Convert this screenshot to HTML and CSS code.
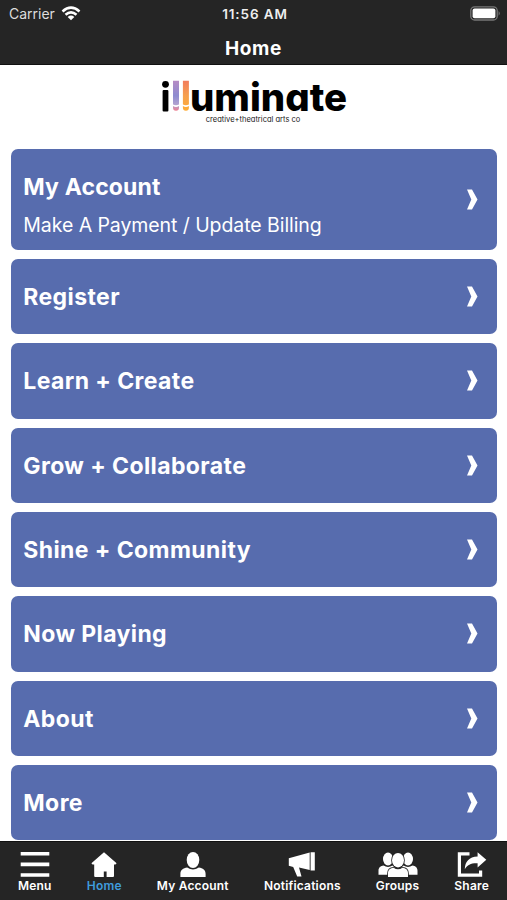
FILE: index.html
```html
<!DOCTYPE html>
<html lang="en">
<head>
  <meta charset="UTF-8">
  <meta name="viewport" content="width=device-width, initial-scale=1.0">
  <title>Home</title>
  <link rel="stylesheet" href="styles.css">
</head>
<body>
  <header class="top-bar">
    <div class="status-bar">
      <div class="carrier">
        <span>Carrier</span>
        <svg width="20" height="15" viewBox="0 0 20 15">
          <g fill="none" stroke="#fff" stroke-width="2.6">
            <path d="M1.5 5.4Q10-2 18.5 5.4"/>
            <path d="M4.5 8.7Q10 3.9 15.5 8.7"/>
          </g>
          <path d="M6.7 10.9Q10 8.2 13.3 10.9L10 14.3Z" fill="#fff"/>
        </svg>
      </div>
      <span class="time">11:56 AM</span>
      <svg class="battery" width="31" height="15" viewBox="0 0 31 15">
        <rect x="0.8" y="0.8" width="26.4" height="13.2" rx="3.8" fill="#252525" stroke="#777" stroke-width="1.3"/>
        <rect x="2.6" y="2.5" width="22.8" height="9.8" rx="2" fill="#fff"/>
        <path d="M28.6 5Q31 7.4 28.6 9.8Z" fill="#777"/>
      </svg>
    </div>
    <h1 class="title">Home</h1>
  </header>

  <main class="content">
    <svg class="logo" width="190" height="48" viewBox="0 0 190 48">
      <defs>
        <linearGradient id="violet" x1="0" y1="0" x2="0" y2="1">
          <stop offset="0" stop-color="#b58bc4"/>
          <stop offset="0.5" stop-color="#8d8bd0"/>
          <stop offset="0.8" stop-color="#b3a3d0"/>
          <stop offset="1" stop-color="#ee7f90"/>
        </linearGradient>
        <linearGradient id="orange" x1="0" y1="0" x2="0" y2="1">
          <stop offset="0" stop-color="#f27c5c"/>
          <stop offset="0.5" stop-color="#f6a04f"/>
          <stop offset="1" stop-color="#ffad35"/>
        </linearGradient>
      </defs>
      <rect x="3.6" y="12" width="5.8" height="21.4" rx="1"/>
      <circle cx="6.5" cy="6.3" r="3.4"/>
      <path d="M14 2.8h6v23.6q-3 1.6-6 0ZM14 28q3 1.8 6 0v1.7a3 3 0 0 1-6 0Z" fill="url(#violet)"/>
      <path d="M23.9 2.8h6v23.6q-3 1.6-6 0ZM23.9 28q3 1.8 6 0v1.7a3 3 0 0 1-6 0Z" fill="url(#orange)"/>
      <text class="logo-name" x="31" y="33.4" textLength="157" lengthAdjust="spacingAndGlyphs">uminate</text>
      <text class="logo-sub" x="46.8" y="44" textLength="94.5" lengthAdjust="spacingAndGlyphs">creative+theatrical arts co</text>
    </svg>

    <nav class="menu">
      <a class="menu-item tall">
        <span class="label">My Account<small>Make A Payment / Update Billing</small></span>
        <svg class="arrow" viewBox="0 0 11 21"><path d="M0 .4H5L10.5 10.5 5 20.6H0L4.3 10.5Z"/></svg>
      </a>
      <a class="menu-item">
        <span class="label">Register</span>
        <svg class="arrow" viewBox="0 0 11 21"><path d="M0 .4H5L10.5 10.5 5 20.6H0L4.3 10.5Z"/></svg>
      </a>
      <a class="menu-item">
        <span class="label">Learn + Create</span>
        <svg class="arrow" viewBox="0 0 11 21"><path d="M0 .4H5L10.5 10.5 5 20.6H0L4.3 10.5Z"/></svg>
      </a>
      <a class="menu-item">
        <span class="label">Grow + Collaborate</span>
        <svg class="arrow" viewBox="0 0 11 21"><path d="M0 .4H5L10.5 10.5 5 20.6H0L4.3 10.5Z"/></svg>
      </a>
      <a class="menu-item">
        <span class="label">Shine + Community</span>
        <svg class="arrow" viewBox="0 0 11 21"><path d="M0 .4H5L10.5 10.5 5 20.6H0L4.3 10.5Z"/></svg>
      </a>
      <a class="menu-item">
        <span class="label">Now Playing</span>
        <svg class="arrow" viewBox="0 0 11 21"><path d="M0 .4H5L10.5 10.5 5 20.6H0L4.3 10.5Z"/></svg>
      </a>
      <a class="menu-item">
        <span class="label">About</span>
        <svg class="arrow" viewBox="0 0 11 21"><path d="M0 .4H5L10.5 10.5 5 20.6H0L4.3 10.5Z"/></svg>
      </a>
      <a class="menu-item">
        <span class="label">More</span>
        <svg class="arrow" viewBox="0 0 11 21"><path d="M0 .4H5L10.5 10.5 5 20.6H0L4.3 10.5Z"/></svg>
      </a>
    </nav>
  </main>

  <footer class="tab-bar">
    <a class="tab">
      <svg width="30" height="26" viewBox="0 0 30 26"><path d="M.7 0h28.6v3.6H.7zM.7 10.6h28.6v3.6H.7zM.7 21.2h28.6v3.6H.7z"/></svg>
      <span>Menu</span>
    </a>
    <a class="tab active">
      <svg width="26" height="26" viewBox="0 0 26 26"><path d="M13 .3 25.6 11.2 24.5 12.4H23V24a1 1 0 0 1-1 1h-6.4v-5.5h-2.8V25H4.2a1 1 0 0 1-1-1V12.4H1.5L.4 11.2Z"/></svg>
      <span>Home</span>
    </a>
    <a class="tab">
      <svg width="26" height="26" viewBox="0 0 26 26"><ellipse cx="13" cy="8" rx="6.3" ry="8"/><path d="M.4 25v-3c0-4 2.7-6 6.8-6.5q5.8 4 11.6 0c4.1.5 6.8 2.5 6.8 6.5v3Z"/></svg>
      <span>My Account</span>
    </a>
    <a class="tab">
      <svg width="28" height="26" viewBox="0 0 28 26"><path d="M.8 6.2 21.7.5V18L11 15.6 13.5 24.5H9.2L5.2 15 .8 13.8ZM22.6.2h4.2v18.2h-4.2Z"/></svg>
      <span>Notifications</span>
    </a>
    <a class="tab">
      <svg width="40" height="26" viewBox="0 0 40 26">
        <ellipse cx="10" cy="7" rx="5" ry="6.5"/>
        <ellipse cx="30" cy="7" rx="5" ry="6.5"/>
        <path d="M.5 22.8v-4c0-3 2.2-5 5-5.2q4.5 2.7 9 0l2 2-6 7.2ZM39.5 22.8v-4c0-3-2.2-5-5-5.2q-4.5 2.7-9 0l-2 2 6 7.2Z"/>
        <g class="front">
          <ellipse cx="20" cy="8.2" rx="6" ry="7.3"/>
          <path d="M10 25v-3.7c0-3.3 2.4-5.3 5.6-5.5q4.4 3 8.8 0c3.2.2 5.6 2.2 5.6 5.5V25Z"/>
        </g>
      </svg>
      <span>Groups</span>
    </a>
    <a class="tab">
      <svg width="30" height="26" viewBox="0 0 30 26"><path d="M12.5 1.8H2.4v21.4h21.2V18.5" fill="none" stroke="#fff" stroke-width="3.2"/><path d="M20.6.3 29.3 7.8 20.6 15.4V11.3C14 11 10.5 13 7.8 17.2 8 9.5 12 4.8 20.6 4.4Z"/></svg>
      <span>Share</span>
    </a>
  </footer>
</body>
</html>
```
FILE: styles.css
```css
* {
  box-sizing: border-box;
}
body {
  margin: 0;
  height: 900px;
  display: flex;
  flex-direction: column;
  overflow: hidden;
  background-color: #fff;
  color: #fff;
  font-family: Inter, "Liberation Sans", sans-serif;
}
.top-bar {
  height: 64.5px;
  flex-shrink: 0;
  background-color: #252525;
  border-bottom: 1px solid #111;
}
.status-bar {
  height: 28px;
  padding: 0 6px 0 9px;
  display: grid;
  grid-template-columns: 1fr auto 1fr;
  align-items: center;
  font-size: 14px;
}
.carrier {
  display: flex;
  align-items: center;
  gap: 6px;
  color: #ddd;
}
.carrier span {
  margin-top: -2px;
}
.carrier svg {
  margin-top: -2px;
}
.time {
  font-size: 13.5px;
  font-weight: 600;
  letter-spacing: 0.9px;
  color: #eee;
}
.battery {
  justify-self: end;
  margin-top: -1px;
}
.title {
  margin: 0;
  line-height: 41px;
  text-align: center;
  font-size: 19px;
  font-weight: 700;
  letter-spacing: 0.6px;
}
.content {
  flex: 1;
  min-height: 0;
  padding: 13.5px 10.5px 0 11.3px;
}
.logo {
  display: block;
  margin: 0 auto 23px;
  overflow: visible;
}
.logo-name {
  font-size: 38px;
  font-weight: 800;
  font-feature-settings: "cv11";
}
.logo-sub {
  font-size: 7.6px;
  font-weight: 400;
  fill: #222;
  font-feature-settings: "cv11";
}
.menu {
  display: flex;
  flex-direction: column;
  gap: 9px;
}
.menu-item {
  height: 75.33px;
  flex-shrink: 0;
  padding: 0 19px 0 12px;
  display: flex;
  align-items: center;
  justify-content: space-between;
  background-color: #576cae;
  border-radius: 7px;
}
.menu-item.tall {
  height: 101px;
}
.label {
  padding-top: 1px;
  font-size: 23px;
  font-weight: 700;
  line-height: 38px;
  letter-spacing: 0.4px;
}
.tall .label {
  padding-top: 13px;
  letter-spacing: 0.15px;
}
.label small {
  display: block;
  font-size: 19.5px;
  font-weight: 400;
  letter-spacing: -0.07px;
}
.arrow {
  width: 11px;
  height: 21px;
  fill: #fff;
}
.tab-bar {
  height: 59px;
  flex-shrink: 0;
  padding: 10px 18px 0;
  display: flex;
  justify-content: space-between;
  background-color: #252525;
  border-top: 1px solid #111;
}
.tab {
  display: flex;
  flex-direction: column;
  align-items: center;
  font-size: 12px;
  font-weight: 600;
  line-height: 15px;
  letter-spacing: 0.2px;
}
.tab svg {
  fill: #fff;
}
.tab.active span {
  color: #3f9bdc;
}
.front {
  stroke: #252525;
  stroke-width: 1.6;
  paint-order: stroke;
}
```
